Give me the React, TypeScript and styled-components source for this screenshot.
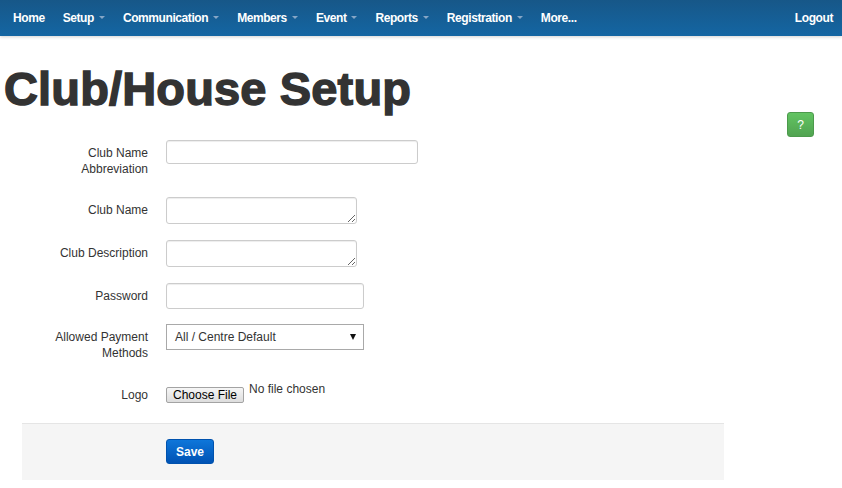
import styled, { createGlobalStyle } from 'styled-components'

const MENU = [
  { label: 'Home', caret: false },
  { label: 'Setup', caret: true },
  { label: 'Communication', caret: true },
  { label: 'Members', caret: true },
  { label: 'Event', caret: true },
  { label: 'Reports', caret: true },
  { label: 'Registration', caret: true },
  { label: 'More...', caret: false },
]

export default function App() {
  return (
    <>
      <GlobalStyle />
      <Navbar>
        {MENU.map((item) => (
          <NavItem key={item.label}>
            {item.label}
            {item.caret && <Caret />}
          </NavItem>
        ))}
        <LogoutItem>Logout</LogoutItem>
      </Navbar>

      <Heading>Club/House Setup</Heading>

      <Body>
        <Form onSubmit={(e) => e.preventDefault()}>
          <Row $mb={20}>
            <Label>Club Name Abbreviation</Label>
            <Control>
              <TextInput $w={252} $h={24} />
            </Control>
          </Row>
          <Row $mb={16}>
            <Label>Club Name</Label>
            <Control>
              <TextArea />
            </Control>
          </Row>
          <Row $mb={16}>
            <Label>Club Description</Label>
            <Control>
              <TextArea />
            </Control>
          </Row>
          <Row $mb={15}>
            <Label>Password</Label>
            <Control>
              <TextInput type="password" $w={198} $h={26} />
            </Control>
          </Row>
          <Row $mb={23}>
            <Label>Allowed Payment Methods</Label>
            <Control>
              <SelectBox>
                <span>All / Centre Default</span>
                <SelectArrow />
              </SelectBox>
            </Control>
          </Row>
          <Row $mb={20}>
            <Label $pt={3}>Logo</Label>
            <Control>
              <ChooseButton type="button">Choose File</ChooseButton>
              <FileStatus>No file chosen</FileStatus>
            </Control>
          </Row>

          <Footer>
            <SaveButton type="submit">Save</SaveButton>
          </Footer>
        </Form>

        <HelpButton type="button">?</HelpButton>
      </Body>
    </>
  )
}

const GlobalStyle = createGlobalStyle`
  html, body {
    margin: 0;
    padding: 0;
    background: #fff;
  }
  body {
    font-family: 'Liberation Sans', Arial, sans-serif;
    font-size: 12px;
    color: #333;
  }
  * {
    box-sizing: border-box;
  }
`

const Navbar = styled.nav`
  display: flex;
  align-items: center;
  height: 36px;
  padding-left: 4px;
  padding-bottom: 1px;
  background: linear-gradient(to bottom, #175788, #1466a3);
  box-shadow: 0 1px 3px rgba(0, 0, 0, 0.18);
`

const NavItem = styled.div`
  display: flex;
  align-items: center;
  padding: 0 9px;
  color: #fff;
  font-weight: bold;
  font-size: 12px;
  letter-spacing: -0.42px;
  white-space: nowrap;
`

const LogoutItem = styled(NavItem)`
  margin-left: auto;
`

const Caret = styled.span`
  width: 0;
  height: 0;
  margin-left: 5px;
  border-left: 3px solid transparent;
  border-right: 3px solid transparent;
  border-top: 3px solid #86a6c6;
`

const Heading = styled.h1`
  margin: 30px 0 0;
  padding-left: 4px;
  font-size: 47px;
  line-height: 46px;
  font-weight: bold;
  color: #333;
  letter-spacing: 0.15px;
  -webkit-text-stroke: 1.4px #333;
`

const Body = styled.div`
  display: flex;
  align-items: flex-start;
`

const Form = styled.form`
  width: 724px;
  padding-top: 28px;
`

const Row = styled.div<{ $mb: number }>`
  display: flex;
  align-items: flex-start;
  margin-bottom: ${(p) => p.$mb}px;
`

const Label = styled.label<{ $pt?: number }>`
  width: 148px;
  padding-left: 40px;
  padding-top: ${(p) => p.$pt ?? 5}px;
  line-height: 16px;
  text-align: right;
  color: #333;
`

const Control = styled.div`
  display: flex;
  align-items: flex-start;
  margin-left: 18px;
`

const TextInput = styled.input<{ $w: number; $h: number }>`
  display: block;
  width: ${(p) => p.$w}px;
  height: ${(p) => p.$h}px;
  margin: 0;
  padding: 3px 6px;
  border: 1px solid #ccc;
  border-radius: 3px;
  box-shadow: inset 0 1px 1px rgba(0, 0, 0, 0.075);
  font: inherit;
  color: #555;
  outline: none;
`

const TextArea = styled.textarea`
  display: block;
  width: 191px;
  height: 27px;
  margin: 0;
  padding: 3px 6px;
  border: 1px solid #ccc;
  border-radius: 3px;
  box-shadow: inset 0 1px 1px rgba(0, 0, 0, 0.075);
  font: inherit;
  outline: none;
`

const SelectBox = styled.div`
  display: flex;
  align-items: center;
  justify-content: space-between;
  width: 198px;
  height: 26px;
  padding: 0 7px 0 8px;
  border: 1px solid #a9a9a9;
  background: #fff;
  color: #333;
`

const SelectArrow = styled.span`
  width: 0;
  height: 0;
  border-left: 3px solid transparent;
  border-right: 3px solid transparent;
  border-top: 6px solid #111;
`

const ChooseButton = styled.button`
  height: 16px;
  margin: 3px 0 0;
  padding: 0 6px;
  border: 1px solid #a3a3a3;
  border-radius: 2px;
  background: linear-gradient(to bottom, #f6f6f6, #dddddd);
  font-family: inherit;
  font-size: 12px;
  line-height: 14px;
  color: #000;
`

const FileStatus = styled.span`
  margin: -3px 0 0 5px;
  line-height: 16px;
  color: #333;
`

const Footer = styled.div`
  margin-left: 22px;
  width: 702px;
  padding: 15px 0 16px 144px;
  border-top: 1px solid #e5e5e5;
  background: #f5f5f5;
`

const SaveButton = styled.button`
  display: block;
  width: 48px;
  height: 25px;
  padding: 0;
  border: 1px solid #0052ae;
  border-radius: 3px;
  background: linear-gradient(to bottom, #0e76da, #0053b4);
  color: #fff;
  font-family: inherit;
  font-size: 12px;
  font-weight: bold;
`

const HelpButton = styled.button`
  width: 27px;
  height: 25px;
  margin: 0 28px 0 auto;
  padding: 0;
  border: 1px solid #4c9a4c;
  border-radius: 3px;
  background: linear-gradient(to bottom, #62c462, #51a351);
  color: #fff;
  font-family: inherit;
  font-size: 12px;
`
